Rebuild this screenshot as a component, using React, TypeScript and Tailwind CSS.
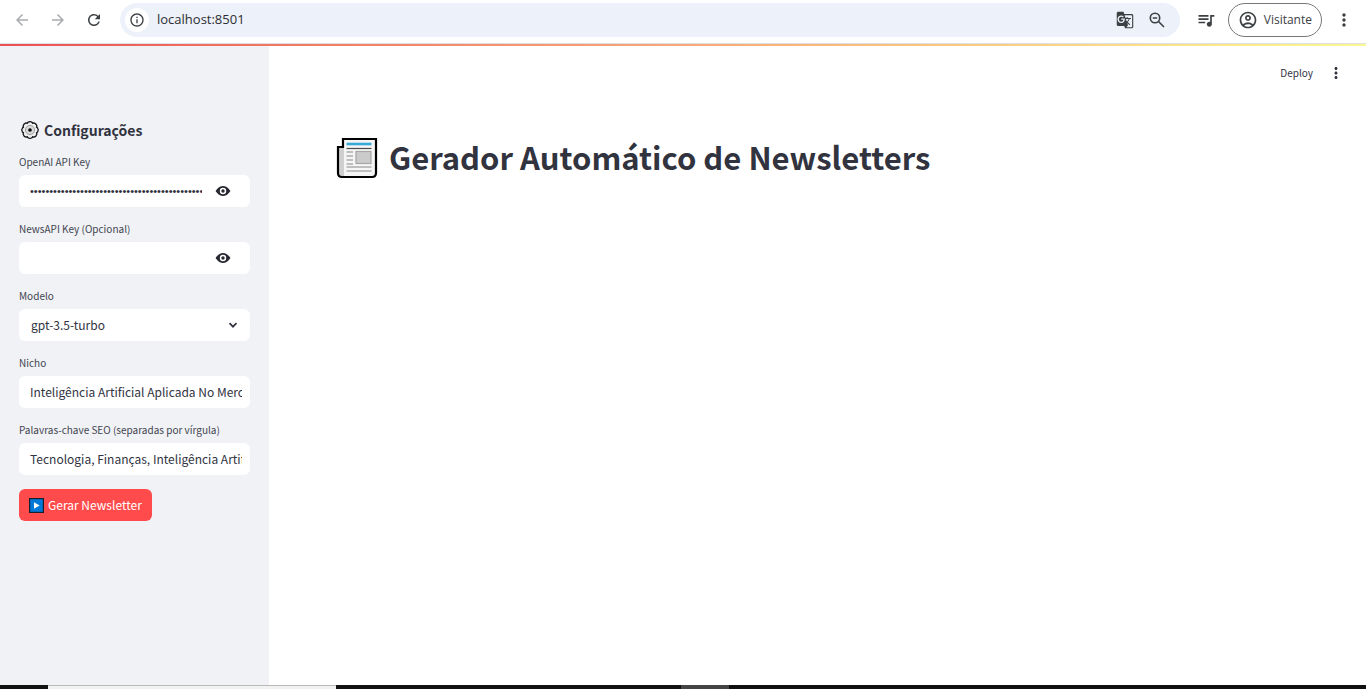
import { useState } from "react";
import type { ReactNode } from "react";
import {
  MdArrowBack,
  MdArrowForward,
  MdGTranslate,
  MdInfoOutline,
  MdMoreVert,
  MdOutlineAccountCircle,
  MdQueueMusic,
  MdRefresh,
} from "react-icons/md";

const inputText = "text-[12px] leading-4 text-[#31333f]";

function EyeIcon() {
  return (
    <svg viewBox="0 0 16 12" className="h-3 w-4" aria-hidden="true">
      <path d="M8 1C3.500 1 .6 6 .6 6s2.900 5 7.400 5 7.400-5 7.400-5S12.500 1 8 1Z" fill="#262730" />
      <circle cx="8" cy="6" r="3.200" fill="#fff" />
      <circle cx="8" cy="6" r="1.700" fill="#262730" />
    </svg>
  );
}

function ZoomOutIcon() {
  return (
    <svg viewBox="0 0 18 18" className="size-[18px]" fill="none" stroke="#3c4043" strokeWidth="1.600" aria-hidden="true">
      <circle cx="7" cy="7" r="4.700" />
      <path d="M10.500 10.500 16 16M4.800 7H9.200" />
    </svg>
  );
}

function GearIcon() {
  return (
    <svg viewBox="0 0 20 20" className="size-5" aria-hidden="true">
      <path
        d="M8 2.200Q10 1 12 2.200L12.600 3.200L14 2.800Q16.300 3.400 16.900 5.800L16.600 7.200L17.600 8Q19 10 17.600 12L16.600 12.800L16.900 14.200Q16.300 16.600 14 17.200L12.600 16.800L12 17.800Q10 19 8 17.800L7.400 16.800L6 17.200Q3.700 16.600 3.100 14.200L3.400 12.800L2.400 12Q1 10 2.400 8L3.400 7.200L3.100 5.800Q3.700 3.400 6 2.800L7.400 3.200Z"
        fill="#ededed"
        stroke="#111"
        strokeWidth="1.300"
      />
      <circle cx="10" cy="10" r="4.600" fill="#d8d8d8" stroke="#909090" strokeWidth=".8" />
      <circle cx="10" cy="10" r="1.800" fill="#000" />
    </svg>
  );
}

function NewspaperIcon() {
  return (
    <svg viewBox="0 0 42 42" className="size-[42px] shrink-0" aria-hidden="true">
      <path d="M7 2H40V36Q40 40 36 40H6Q2 40 2 36V10H7Z" fill="#f5f5f5" />
      <path d="M3 11H8V39H6Q3 39 3 36Z" fill="#cfcfcf" />
      <path d="M7 2H40V36Q40 40 36 40H6Q2 40 2 36V10H7Z" fill="none" stroke="#000" strokeWidth="2.200" />
      <path d="M10.500 7H35.500" stroke="#36a9d6" strokeWidth="2.600" />
      <path d="M10.500 11.500H35.500" stroke="#4a4a4a" strokeWidth="1.200" />
      <path d="M10.500 15H17M10.500 19H17M10.500 23H17M10.500 27H17M10.500 30H35.500M10.500 34H35.500" stroke="#adadad" strokeWidth="1.400" />
      <rect x="20" y="14.500" width="15" height="12" fill="#cbcbcb" stroke="#a6a6a6" strokeWidth="1.200" />
    </svg>
  );
}

function PlayIcon() {
  return (
    <svg viewBox="0 0 15 15" className="size-[15px]" aria-hidden="true">
      <rect x=".6" y=".6" width="13.800" height="13.800" fill="#0078d7" stroke="#17202e" strokeWidth="1.200" />
      <path d="M5 4.300 10.600 7.500 5 10.700Z" fill="#fff" />
    </svg>
  );
}

function Field({ id, label, children }: { id: string; label: string; children: ReactNode }) {
  return (
    <div className="flex flex-col gap-[5px]">
      <label htmlFor={id} className="text-[10px] leading-4 text-[#43454f]">
        {label}
      </label>
      <div className="flex h-8 items-center rounded-md bg-white">{children}</div>
    </div>
  );
}

function SecretField({ id, label, initial }: { id: string; label: string; initial: string }) {
  const [value, setValue] = useState(initial);
  const [visible, setVisible] = useState(false);
  return (
    <Field id={id} label={label}>
      <input
        id={id}
        type={visible ? "text" : "password"}
        value={value}
        onChange={(e) => setValue(e.target.value)}
        className="ml-[11px] min-w-0 flex-1 bg-transparent font-['Liberation_Sans',sans-serif] text-[11px] leading-4 text-[#31333f] outline-none"
      />
      <button
        type="button"
        aria-label="Mostrar ou ocultar"
        onClick={() => setVisible(!visible)}
        className="mr-1.5 flex h-8 w-[42px] shrink-0 items-center justify-center"
      >
        <EyeIcon />
      </button>
    </Field>
  );
}

function TextField({ id, label, initial }: { id: string; label: string; initial: string }) {
  const [value, setValue] = useState(initial);
  return (
    <Field id={id} label={label}>
      <input
        id={id}
        type="text"
        value={value}
        onChange={(e) => setValue(e.target.value)}
        className={`mr-2 ml-[11px] min-w-0 flex-1 bg-transparent outline-none ${inputText}`}
      />
    </Field>
  );
}

function BrowserBar() {
  return (
    <header className="flex h-11 shrink-0 items-start border-b border-[#dcdfe3] bg-white pt-[3px] pr-3 pl-[13px] font-['Open_Sans',sans-serif] text-[#3c4043]">
      <nav className="flex h-[34px] items-center gap-[18px] text-[18px]">
        <button type="button" aria-label="Voltar" className="text-[#a9abae]">
          <MdArrowBack />
        </button>
        <button type="button" aria-label="Avançar" className="text-[#a9abae]">
          <MdArrowForward />
        </button>
        <button type="button" aria-label="Recarregar">
          <MdRefresh />
        </button>
      </nav>
      <div className="ml-[17px] flex h-[34px] min-w-0 flex-1 items-center rounded-full bg-[#ecf1fa] pr-3.5 pl-[5px]">
        <button
          type="button"
          aria-label="Informações do site"
          className="flex size-6 items-center justify-center rounded-full bg-white text-[16px]"
        >
          <MdInfoOutline />
        </button>
        <input
          aria-label="Endereço"
          defaultValue="localhost:8501"
          className="ml-2 min-w-0 flex-1 bg-transparent text-[13px] text-[#2c2e31] outline-none"
        />
        <button type="button" aria-label="Traduzir" className="text-[18px]">
          <MdGTranslate />
        </button>
        <button type="button" aria-label="Zoom" className="ml-3.5">
          <ZoomOutIcon />
        </button>
      </div>
      <div className="ml-4 flex h-[34px] items-center">
        <button type="button" aria-label="Controle de mídia" className="text-[20px]">
          <MdQueueMusic />
        </button>
        <button
          type="button"
          className="ml-3 flex h-[34px] items-center gap-1.5 rounded-full border border-[#74777b] px-[9px] text-[12px]"
        >
          <MdOutlineAccountCircle className="text-[20px]" />
          Visitante
        </button>
        <button type="button" aria-label="Menu do navegador" className="ml-3 text-[20px]">
          <MdMoreVert />
        </button>
      </div>
    </header>
  );
}

function Sidebar() {
  return (
    <aside className="w-[269px] shrink-0 bg-[#f0f2f6] px-[19px] pt-[73px]">
      <h2 className="flex h-[22px] items-center gap-1 pl-px text-[14px] font-bold text-[#31333f]">
        <GearIcon />
        Configurações
      </h2>
      <form className="mt-[13px] flex flex-col items-stretch gap-3.5" onSubmit={(e) => e.preventDefault()}>
        <SecretField id="openai" label="OpenAI API Key" initial="00000000000000000000000000000000000000000000000000" />
        <SecretField id="newsapi" label="NewsAPI Key (Opcional)" initial="" />
        <Field id="modelo" label="Modelo">
          <div className="relative flex h-full w-full items-center">
            <select
              id="modelo"
              className={`h-full w-full appearance-none bg-transparent pl-3 outline-none ${inputText}`}
            >
              <option>gpt-3.5-turbo</option>
            </select>
            <svg viewBox="0 0 10 10" className="pointer-events-none absolute right-3 size-2.5" aria-hidden="true">
              <path d="M1.500 3.200 5 6.700 8.500 3.200" fill="none" stroke="#31333f" strokeWidth="1.700" />
            </svg>
          </div>
        </Field>
        <TextField id="nicho" label="Nicho" initial="Inteligência Artificial Aplicada No Mercado Financeiro" />
        <TextField
          id="seo"
          label="Palavras-chave SEO (separadas por vírgula)"
          initial="Tecnologia, Finanças, Inteligência Artificial"
        />
        <button
          type="submit"
          className="flex h-8 items-center gap-1 self-start rounded-md bg-[#ff4b4b] px-2.5 text-[12px] text-white"
        >
          <PlayIcon />
          Gerar Newsletter
        </button>
      </form>
    </aside>
  );
}

export default function App() {
  return (
    <div className="flex min-h-screen flex-col bg-white font-['Noto_Sans_CJK_SC',sans-serif]">
      <BrowserBar />
      <div className="h-0.5 shrink-0 bg-linear-to-r from-[#ea5053] via-[#f8a878] to-[#faf892]" />
      <div className="flex flex-1">
        <Sidebar />
        <main className="min-w-0 flex-1">
          <div className="flex items-center justify-end gap-3.5 pt-[17px] pr-[21px] text-[#31333f]">
            <button type="button" className="text-[10px] leading-5">
              Deploy
            </button>
            <button type="button" aria-label="Menu" className="text-[18px]">
              <MdMoreVert />
            </button>
          </div>
          <h1 className="mt-[52px] flex items-center gap-[11px] px-[67px] text-[31px] leading-[44px] font-bold text-[#31333f]">
            <NewspaperIcon />
            <span className="pb-0.5">Gerador Automático de Newsletters</span>
          </h1>
        </main>
      </div>
      <footer className="flex h-1 shrink-0">
        <div className="w-12 bg-[#111313]" />
        <div className="w-72 border-t border-[#b9b9b9] bg-[#f2f2f2]" />
        <div className="w-[345px] bg-[#111313]" />
        <div className="w-12 bg-[#444546]" />
        <div className="flex-1 bg-[#11100e]" />
      </footer>
    </div>
  );
}
